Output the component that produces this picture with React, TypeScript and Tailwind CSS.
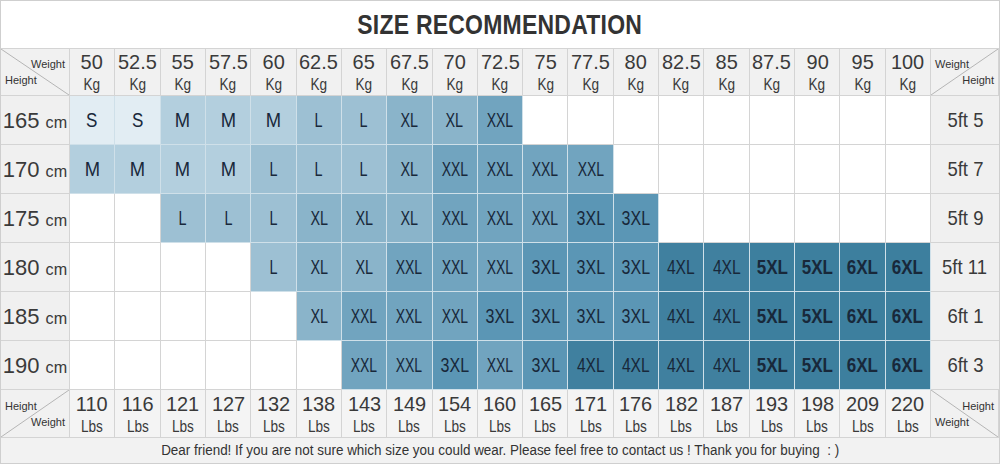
import React from "react";

const weights = ["50", "52.5", "55", "57.5", "60", "62.5", "65", "67.5", "70", "72.5", "75", "77.5", "80", "82.5", "85", "87.5", "90", "95", "100"];
const lbs = ["110", "116", "121", "127", "132", "138", "143", "149", "154", "160", "165", "171", "176", "182", "187", "193", "198", "209", "220"];

const rows = [
  { cm: "165", ft: "5ft 5", sizes: ["S", "S", "M", "M", "M", "L", "L", "XL", "XL", "XXL", "", "", "", "", "", "", "", "", ""] },
  { cm: "170", ft: "5ft 7", sizes: ["M", "M", "M", "M", "L", "L", "L", "XL", "XXL", "XXL", "XXL", "XXL", "", "", "", "", "", "", ""] },
  { cm: "175", ft: "5ft 9", sizes: ["", "", "L", "L", "L", "XL", "XL", "XL", "XXL", "XXL", "XXL", "3XL", "3XL", "", "", "", "", "", ""] },
  { cm: "180", ft: "5ft 11", sizes: ["", "", "", "", "L", "XL", "XL", "XXL", "XXL", "XXL", "3XL", "3XL", "3XL", "4XL", "4XL", "5XL", "5XL", "6XL", "6XL"] },
  { cm: "185", ft: "6ft 1", sizes: ["", "", "", "", "", "XL", "XXL", "XXL", "XXL", "3XL", "3XL", "3XL", "3XL", "4XL", "4XL", "5XL", "5XL", "6XL", "6XL"] },
  { cm: "190", ft: "6ft 3", sizes: ["", "", "", "", "", "", "XXL", "XXL", "3XL", "XXL", "3XL", "4XL", "4XL", "4XL", "4XL", "5XL", "5XL", "6XL", "6XL"] },
];

// cell colour and glyph squeeze per size
const sizeStyle: Record<string, string> = {
  S: "bg-[#e2edf3]",
  M: "bg-[#b3cfde]",
  L: "bg-[#9dc0d3]",
  XL: "bg-[#8ab4ca]",
  XXL: "bg-[#71a4bf]",
  "3XL": "bg-[#5b96b5]",
  "4XL": "bg-[#40809f]",
  "5XL": "bg-[#3d7f9e]",
  "6XL": "bg-[#3d7f9e]",
};

const sizeText: Record<string, string> = {
  S: "scale-x-[0.85]",
  M: "scale-x-[0.92]",
  L: "scale-x-[0.72]",
  XL: "scale-x-[0.72]",
  XXL: "scale-x-[0.7]",
  "3XL": "scale-x-[0.8]",
  "4XL": "scale-x-[0.78]",
  "5XL": "scale-x-[0.85] font-bold",
  "6XL": "scale-x-[0.85] font-bold",
};

function Corner({ top, bottom, topRight, line }: { top: string; bottom: string; topRight: boolean; line: "down" | "up" }) {
  return (
    <div className="relative flex flex-col justify-center gap-0.5 border-r border-b border-[#d4d4d4] bg-[#f1f1f1] px-1 text-[11px] leading-[14px] text-[#333]">
      <svg className="absolute inset-0 h-full w-full" preserveAspectRatio="none" viewBox="0 0 100 100">
        {line === "down" ? (
          <line x1="0" y1="0" x2="100" y2="100" stroke="#b5b5b5" strokeWidth="1" vectorEffect="non-scaling-stroke" />
        ) : (
          <line x1="0" y1="100" x2="100" y2="0" stroke="#b5b5b5" strokeWidth="1" vectorEffect="non-scaling-stroke" />
        )}
      </svg>
      <span className={topRight ? "self-end" : "self-start"}>{top}</span>
      <span className={topRight ? "self-start" : "self-end"}>{bottom}</span>
    </div>
  );
}

function Unit({ value, unit }: { value: string; unit: string }) {
  return (
    <div className="flex flex-col items-center justify-center border-r border-b border-[#d4d4d4] leading-none">
      <span className="inline-block scale-x-[0.95] text-[21px] text-[#3a3a3a]">{value}</span>
      <span className="mt-[5px] inline-block scale-x-[0.85] text-[16px] text-[#3a3a3a]">{unit}</span>
    </div>
  );
}

export default function App() {
  return (
    <div className="h-[466px] w-[1000px] bg-white font-['Liberation_Sans',Arial,sans-serif] text-[#333]">
      <div className="flex h-[464px] flex-col border border-[#cfcfcf]">
        <div className="flex h-[48px] items-center justify-center border-b border-[#d4d4d4]">
          <h1 className="inline-block scale-x-[0.82] text-[28px] font-bold tracking-[0.3px] text-[#333]">SIZE RECOMMENDATION</h1>
        </div>
        <div className="grid grid-cols-[69px_repeat(19,minmax(0,1fr))_68px] grid-rows-[47px_repeat(6,49px)_48px]">
          <Corner top="Weight" bottom="Height" topRight line="down" />
          {weights.map(w => (
            <div key={w} className="grid bg-[#f1f1f1]">
              <Unit value={w} unit="Kg" />
            </div>
          ))}
          <Corner top="Weight" bottom="Height" topRight={false} line="up" />

          {rows.map(r => (
            <React.Fragment key={r.cm}>
              <div className="flex items-center justify-center border-r border-b border-[#d4d4d4] bg-[#f0f0f0] text-[#3a3a3a]">
                <div className="flex items-baseline gap-[5px]">
                  <span className="text-[22px]">{r.cm}</span>
                  <span className="inline-block scale-x-[0.95] text-[17px]">cm</span>
                </div>
              </div>
              {r.sizes.map((s, i) =>
                s ? (
                  <div
                    key={i}
                    className={`flex items-center justify-center border-r border-b border-[#cfe0e9] ${sizeStyle[s]} text-[20px] text-[#18283a]`}
                  >
                    <span className={`inline-block ${sizeText[s]}`}>{s}</span>
                  </div>
                ) : (
                  <div key={i} className="border-r border-b border-[#d4d4d4] bg-white" />
                )
              )}
              <div className="flex items-center justify-center border-b border-[#d4d4d4] bg-[#f0f0f0] text-[21px] text-[#3a3a3a]">
                <span className="inline-block scale-x-[0.88]">{r.ft}</span>
              </div>
            </React.Fragment>
          ))}

          <Corner top="Height" bottom="Weight" topRight={false} line="up" />
          {lbs.map(l => (
            <div key={l} className="grid bg-[#f4f4f4]">
              <Unit value={l} unit="Lbs" />
            </div>
          ))}
          <Corner top="Height" bottom="Weight" topRight line="down" />
        </div>
        <div className="flex flex-1 items-center justify-center bg-[#f2f2f2] text-[14px] text-[#333]">
          <span className="inline-block scale-x-[0.96]">
            Dear friend! If you are not sure which size you could wear. Please feel free to contact us ! Thank you for buying&nbsp; : )
          </span>
        </div>
      </div>
    </div>
  );
}
